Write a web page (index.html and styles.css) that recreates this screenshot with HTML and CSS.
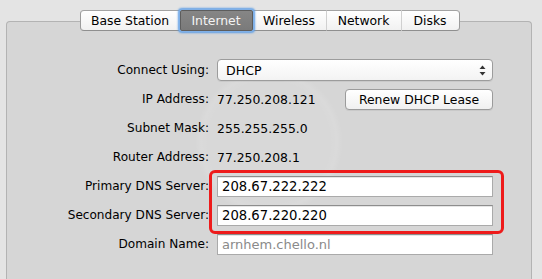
FILE: index.html
```html
<!DOCTYPE html>
<html>
<head>
<meta charset="utf-8">
<link rel="stylesheet" href="styles.css">
</head>
<body>
<div class="window">
  <div class="tabs">
    <div class="tab first">Base Station</div>
    <div class="tab selected">Internet</div>
    <div class="tab">Wireless</div>
    <div class="tab">Network</div>
    <div class="tab last">Disks</div>
  </div>
  <div class="panel">
    <div class="form">
      <div class="label">Connect Using:</div>
      <div class="value">
        <div class="popup"><span>DHCP</span>
          <svg class="arrows" width="7" height="11" viewBox="0 0 7 11"><path d="M3.5 0.5 L6.5 4 L0.5 4 Z" fill="#333"/><path d="M3.5 10.5 L6.5 7 L0.5 7 Z" fill="#333"/></svg>
        </div>
      </div>

      <div class="label">IP Address:</div>
      <div class="value split"><span>77.250.208.121</span><div class="button">Renew DHCP Lease</div></div>

      <div class="label">Subnet Mask:</div>
      <div class="value">255.255.255.0</div>

      <div class="label">Router Address:</div>
      <div class="value">77.250.208.1</div>

      <div class="label">Primary DNS Server:</div>
      <div class="value"><div class="field">208.67.222.222</div></div>

      <div class="label">Secondary DNS Server:</div>
      <div class="value"><div class="field">208.67.220.220</div></div>

      <div class="label">Domain Name:</div>
      <div class="value"><div class="field placeholder">arnhem.chello.nl</div></div>
    </div>
    <div class="highlight"></div>
  </div>
</div>
</body>
</html>
```
FILE: styles.css
```css
html, body {
  margin: 0;
  padding: 0;
  background: #e4e4e4;
  font-family: "DejaVu Sans", "Liberation Sans", sans-serif;
  font-size: 12.4px;
  color: #111;
  overflow: hidden;
}
.window {
  width: 526px;
  height: 269px;
  padding: 10px 10px 0 6px;
}
.tabs {
  position: relative;
  z-index: 2;
  display: flex;
  justify-content: center;
  height: 21px;
  margin-left: 1px;
}
.tab {
  box-sizing: border-box;
  height: 21px;
  line-height: 19px;
  padding: 0 8px;
  text-align: center;
  white-space: nowrap;
  background: linear-gradient(#ffffff, #f1f1f1);
  border-top: 1px solid #a3a3a3;
  border-bottom: 1px solid #8f8f8f;
  border-left: 1px solid #d0d0d0;
  color: #000;
}
.tab.first {
  border-left: 1px solid #9b9b9b;
  border-radius: 4px 0 0 4px;
  width: 100px;
}
.tab.last {
  border-right: 1px solid #9b9b9b;
  border-radius: 0 4px 4px 0;
  width: 59px;
}
.tab.selected {
  width: 73px;
  background: linear-gradient(#868686, #7a7a7a);
  color: #f4f4f4;
  border: 1px solid #5d5d5d;
  box-shadow: 0 0 0 1px #7fb0e8, 0 0 2px 2px #5e9ee6;
  border-radius: 2px;
  position: relative;
  z-index: 1;
}
.tab:nth-child(3) { width: 73px; border-left: none; }
.tab:nth-child(4) { width: 75px; }
.panel {
  position: relative;
  margin-top: -10px;
  height: 258px;
  box-sizing: border-box;
  border: 1px solid #b3b3b3;
  border-bottom: none;
  border-radius: 4px 4px 0 0;
  background:
    radial-gradient(circle at 262px 120px, rgba(255,255,255,0.06) 0, rgba(255,255,255,0.06) 62px, rgba(255,255,255,0.10) 68px, rgba(255,255,255,0) 74px),
    #d6d6d6;
  padding-top: 37px;
}
.form {
  display: grid;
  grid-template-columns: 202px 276px;
  grid-auto-rows: 22px;
  column-gap: 8px;
  row-gap: 7px;
}
.label {
  text-align: right;
  line-height: 22px;
  white-space: nowrap;
  color: #000;
  font-size: 12.1px;
}
.value {
  display: flex;
  align-items: center;
  white-space: nowrap;
  color: #000;
}
.value.split {
  justify-content: space-between;
}
.popup {
  box-sizing: border-box;
  width: 277px;
  height: 22px;
  display: flex;
  align-items: center;
  justify-content: space-between;
  padding: 0 6px 0 8px;
  border: 1px solid #9c9c9c;
  border-radius: 4px;
  background: linear-gradient(#ffffff, #f3f3f3);
  box-shadow: 0 1px 0 rgba(0,0,0,0.06);
  font-size: 12.6px;
}
.arrows { display: block; }
.button {
  box-sizing: border-box;
  width: 148px;
  height: 21px;
  line-height: 19px;
  text-align: center;
  border: 1px solid #9b9b9b;
  border-radius: 4px;
  background: linear-gradient(#ffffff, #f0f0f0);
  box-shadow: 0 1px 0 rgba(0,0,0,0.06);
  color: #000;
  font-size: 12.4px;
}
.field {
  box-sizing: border-box;
  width: 277px;
  height: 21px;
  line-height: 19px;
  padding-left: 4px;
  background: #fff;
  border: 1px solid #aaaaaa;
  border-top-color: #8d8d8d;
  box-shadow: inset 0 1px 0 #e6e6e6;
  font-size: 13.2px;
  color: #000;
}
.field.placeholder {
  color: #8a8a8a;
  font-size: 13px;
}
.highlight {
  position: absolute;
  left: 202px;
  top: 148px;
  width: 295px;
  height: 64px;
  box-sizing: border-box;
  border: 3px solid #ee1b1b;
  border-radius: 6px;
  pointer-events: none;
}
```
